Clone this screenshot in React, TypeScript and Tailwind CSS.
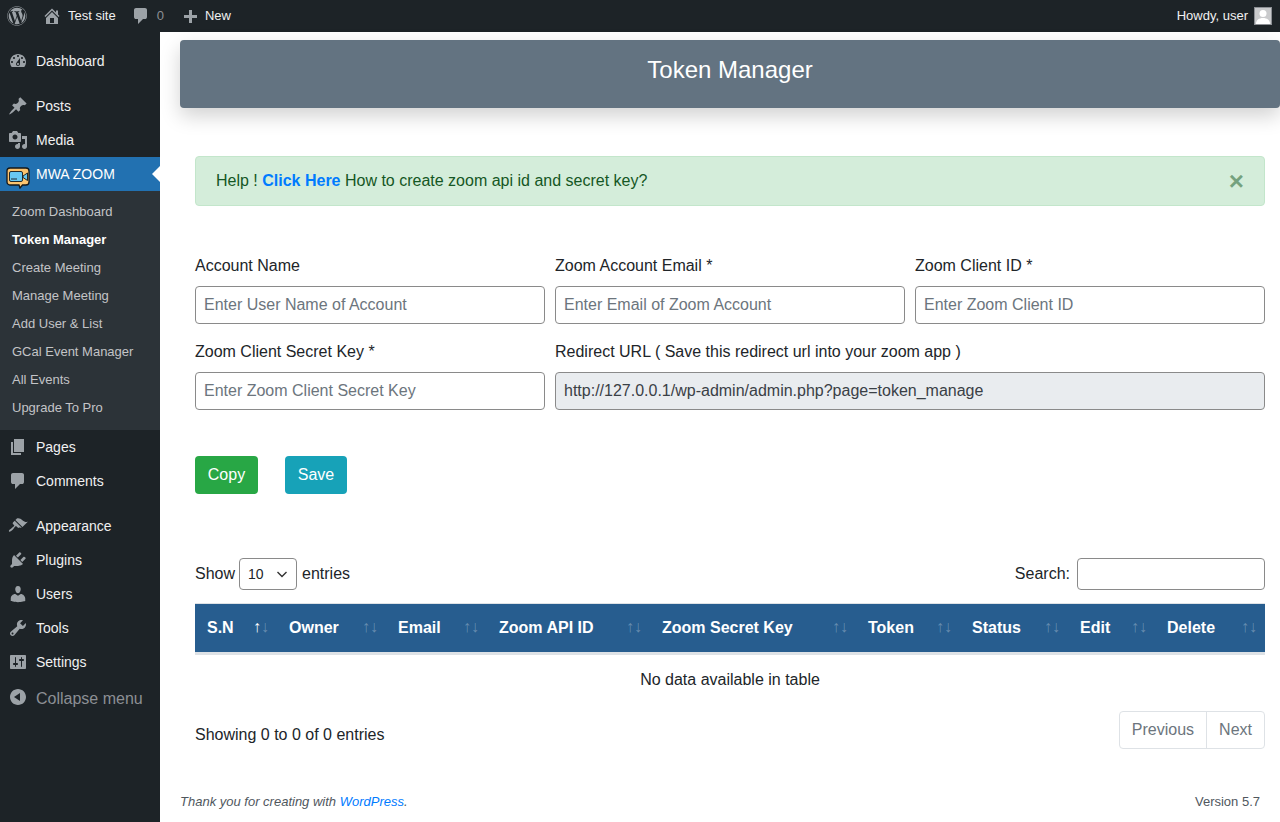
import React from 'react';
import { FaWordpress } from 'react-icons/fa';

const icons = {
  home: 'M16 8.5l1.53 1.53-1.06 1.06L10 4.62l-6.47 6.47-1.06-1.06L10 2.5l4 4v-2h2v4zm-6-2.46l6 5.99V18H4v-5.97zM12 17v-5H8v5h4z',
  comment: 'M5 2h9q.82 0 1.41.59T16 4v7q0 .82-.59 1.41T14 13h-2l-5 5v-5H5q-.82 0-1.41-.59T3 11V4q0-.82.59-1.41T5 2z',
  plus: 'M17 7v3h-5v5H9v-5H4V7h5V2h3v5h5z',
  dashboard: 'M3.76 16h12.48c1.1-1.37 1.76-3.11 1.76-5 0-4.42-3.58-8-8-8s-8 3.58-8 8c0 1.89.66 3.63 1.76 5zM10 4c.55 0 1 .45 1 1s-.45 1-1 1-1-.45-1-1 .45-1 1-1zM6 6c.55 0 1 .45 1 1s-.45 1-1 1-1-.45-1-1 .45-1 1-1zm8 0c.55 0 1 .45 1 1s-.45 1-1 1-1-.45-1-1 .45-1 1-1zm-5.37 5.55L12 7v6c0 1.1-.9 2-2 2s-2-.9-2-2c0-.57.24-1.08.63-1.45zM4 10c.55 0 1 .45 1 1s-.45 1-1 1-1-.45-1-1 .45-1 1-1zm12 0c.55 0 1 .45 1 1s-.45 1-1 1-1-.45-1-1 .45-1 1-1zm-5 3c0-.55-.45-1-1-1s-1 .45-1 1 .45 1 1 1 1-.45 1-1z',
  posts: 'M10.44 3.02l1.82-1.82 6.36 6.35-1.83 1.82c-1.05-.68-2.48-.57-3.41.36l-.75.75c-.92.93-1.04 2.35-.35 3.41l-1.83 1.82-2.41-2.41-2.8 2.79c-.42.42-3.38 2.71-3.8 2.29s1.86-3.39 2.28-3.81l2.79-2.79L4.1 9.36l1.83-1.82c1.05.69 2.48.57 3.4-.36l.75-.75c.93-.92 1.05-2.35.36-3.41z',
  media: 'M13 11V4c0-.55-.45-1-1-1h-1.67L9 1H5L3.67 3H2c-.55 0-1 .45-1 1v7c0 .55.45 1 1 1h10c.55 0 1-.45 1-1zM7 4.5c1.38 0 2.5 1.12 2.5 2.5S8.38 9.5 7 9.5 4.5 8.38 4.5 7 5.62 4.5 7 4.5zM14 6h5v10.5c0 1.38-1.12 2.5-2.5 2.5S14 17.88 14 16.5s1.12-2.5 2.5-2.5c.17 0 .34.02.5.05V9h-3V6zm-4 8.05V13h2v3.5c0 1.38-1.12 2.5-2.5 2.5S7 17.88 7 16.5 8.12 14 9.5 14c.17 0 .34.02.5.05z',
  pages: 'M6 15V2h10v13H6zm-1 1h8v2H3V5h2v11z',
  appearance: 'M14.48 11.06L7.41 3.99l1.5-1.5c.5-.56 2.3-.47 3.51.32 1.21.8 1.43 1.28 2.91 2.1 1.18.64 2.45 1.26 4.45.85zm-.71.71L6.7 4.7 4.93 6.47c-.39.39-.39 1.02 0 1.41l1.06 1.06c.39.39.39 1.03 0 1.42-.6.6-1.43 1.11-2.21 1.69-.35.26-.7.53-1.01.84C1.43 13.23.4 14.85 1.05 15.5c.65.65 2.27-.38 3.62-1.72.31-.31.58-.66.84-1.01.58-.78 1.09-1.61 1.69-2.21.39-.39 1.03-.39 1.42 0l1.06 1.06c.39.39 1.02.39 1.41 0z',
  plugins: 'M13.11 4.36L9.87 7.6 8 5.73l3.24-3.24c.35-.34 1.05-.2 1.56.32.52.51.66 1.21.31 1.55zm-8 1.77l.91-1.12 9.01 9.01-1.19.84c-.71.71-2.63 1.16-3.82 1.16H6.14L4.9 17.26c-.59.59-1.54.59-2.12 0-.59-.58-.59-1.53 0-2.12l1.24-1.24v-3.88c0-1.13.4-3.19 1.09-3.89zm7.26 3.97l3.24-3.24c.34-.35 1.04-.21 1.55.31.52.51.66 1.21.31 1.55l-3.24 3.25z',
  users: 'M10 9.25c-2.27 0-2.73-3.44-2.73-3.44C7 4.02 7.82 2 9.97 2c2.16 0 2.98 2.02 2.71 3.81 0 0-.41 3.44-2.68 3.44zm0 2.57L12.72 10c2.39 0 4.52 2.33 4.52 4.53v2.49s-3.65 1.13-7.24 1.13c-3.65 0-7.24-1.13-7.24-1.13v-2.49c0-2.25 1.94-4.48 4.47-4.48z',
  tools: 'M16.68 9.77c-1.34 1.34-3.3 1.67-4.95.99l-5.41 6.52c-.99.99-2.59.99-3.58 0s-.99-2.59 0-3.57l6.52-5.42c-.68-1.65-.35-3.61.99-4.95 1.28-1.28 3.12-1.62 4.72-1.06l-2.89 2.89 2.82 2.82 2.86-2.87c.53 1.58.18 3.39-1.08 4.65zM3.81 16.21c.4.39 1.04.39 1.43 0 .4-.4.4-1.04 0-1.43-.39-.4-1.03-.4-1.43 0-.39.39-.39 1.03 0 1.43z',
  settings: 'M18 16V4c0-.55-.45-1-1-1H3c-.55 0-1 .45-1 1v12c0 .55.45 1 1 1h14c.55 0 1-.45 1-1zM8 11h1c.55 0 1 .45 1 1s-.45 1-1 1H8v1.5c0 .28-.22.5-.5.5s-.5-.22-.5-.5V13H6c-.55 0-1-.45-1-1s.45-1 1-1h1V5.5c0-.28.22-.5.5-.5s.5.22.5.5V11zm5-2h-1c-.55 0-1-.45-1-1s.45-1 1-1h1V5.5c0-.28.22-.5.5-.5s.5.22.5.5V7h1c.55 0 1 .45 1 1s-.45 1-1 1h-1v5.5c0 .28-.22.5-.5.5s-.5-.22-.5-.5V9z',
  collapse: 'M10 2c4.42 0 8 3.58 8 8s-3.58 8-8 8-8-3.58-8-8 3.58-8 8-8zm2 4l-6 4 6 4V6z',
};

type IconName = keyof typeof icons;

const Dash = ({ name, className }: { name: IconName; className?: string }) => (
  <svg viewBox="0 0 20 20" className={className} fill="currentColor" fillRule="evenodd">
    <path d={icons[name]} />
  </svg>
);

const MenuItem = ({ icon, label }: { icon: IconName; label: string }) => (
  <div className="flex h-[34px] items-center text-[14px] text-[#f0f0f1]">
    <div className="flex w-[36px] shrink-0 justify-center pr-[1px]">
      <Dash name={icon} className="h-5 w-5 text-[#9ca2a7]" />
    </div>
    <span>{label}</span>
  </div>
);

const ZoomLogo = () => (
  <svg viewBox="0 0 24 22" className="h-[22px] w-[24px]">
    <path d="M4 1h16a3 3 0 0 1 3 3v11a3 3 0 0 1-3 3h-3.500l-2.500 3-1-3H4a3 3 0 0 1-3-3V4a3 3 0 0 1 3-3z" fill="#fcc46f" stroke="#14181b" strokeWidth="1.300" />
    <rect x="3.500" y="4.500" width="13" height="10" rx="1.500" fill="#68c8f2" stroke="#14181b" strokeWidth="0.900" />
    <path d="M17 9l4.500-3v7.500L17 10.500z" fill="#68c8f2" stroke="#14181b" strokeWidth="0.900" />
    <path d="M5 12h6" stroke="#14181b" strokeWidth="0.900" />
  </svg>
);

const subItems = ['Zoom Dashboard', 'Token Manager', 'Create Meeting', 'Manage Meeting', 'Add User & List', 'GCal Event Manager', 'All Events', 'Upgrade To Pro'];

const Sidebar = () => (
  <aside className="flex w-[160px] shrink-0 flex-col bg-[#1d2327] pt-[12px]">
    <MenuItem icon="dashboard" label="Dashboard" />
    <div className="h-[11px]" />
    <MenuItem icon="posts" label="Posts" />
    <MenuItem icon="media" label="Media" />
    <div className="relative flex h-[34px] items-center bg-[#2271b1] text-[14px] text-white">
      <div className="flex w-[36px] shrink-0 justify-start pl-[6px] pt-[8px]">
        <ZoomLogo />
      </div>
      <span>MWA ZOOM</span>
      <div className="absolute right-0 top-[9px] h-0 w-0 border-y-[8px] border-r-[8px] border-y-transparent border-r-white" />
    </div>
    <div className="flex flex-col bg-[#2c3338] pb-[8px] pt-[7px]">
      {subItems.map(item => (
        <div key={item} className={`flex h-[28px] items-center pl-[12px] text-[13px] ${item === 'Token Manager' ? 'font-semibold text-white' : 'text-[#c3c4c7]'}`}>
          {item}
        </div>
      ))}
    </div>
    <MenuItem icon="pages" label="Pages" />
    <MenuItem icon="comment" label="Comments" />
    <div className="h-[11px]" />
    <MenuItem icon="appearance" label="Appearance" />
    <MenuItem icon="plugins" label="Plugins" />
    <MenuItem icon="users" label="Users" />
    <MenuItem icon="tools" label="Tools" />
    <MenuItem icon="settings" label="Settings" />
    <div className="flex h-[40px] items-center text-[16px] text-[#8c8f94]">
      <div className="flex w-[36px] shrink-0 justify-center pb-[4px] pr-[1px]">
        <Dash name="collapse" className="h-5 w-5 text-[#9ca2a7]" />
      </div>
      <span>Collapse menu</span>
    </div>
  </aside>
);

const TopBar = () => (
  <header className="flex h-[32px] items-center justify-between bg-[#1d2327] text-[13px] text-[#f0f0f1]">
    <div className="flex items-center">
      <FaWordpress className="ml-[7px] h-[20px] w-[20px] text-[#9ca2a7]" />
      <Dash name="home" className="ml-[15px] h-5 w-5 text-[#9ca2a7]" />
      <span className="ml-[6px]">Test site</span>
      <Dash name="comment" className="ml-[15px] h-5 w-5 text-[#9ca2a7]" />
      <span className="ml-[6px] text-[#8c8f94]">0</span>
      <Dash name="plus" className="ml-[16px] h-5 w-5 translate-y-[2px] text-[#9ca2a7]" />
      <span className="ml-[5px]">New</span>
    </div>
    <div className="flex items-center pr-[8px]">
      <span>Howdy, user</span>
      <div className="ml-[6px] flex h-[18px] w-[18px] items-end justify-center overflow-hidden border border-[#8c8f94] bg-[#c9cacc]">
        <svg viewBox="0 0 16 16" className="h-4 w-4 text-white" fill="currentColor">
          <circle cx="8" cy="5.500" r="3.500" />
          <path d="M1 16c0-4 3-6 7-6s7 2 7 6z" />
        </svg>
      </div>
    </div>
  </header>
);

const Field = ({ label, placeholder, className }: { label: string; placeholder: string; className?: string }) => (
  <div className={`flex flex-col ${className ?? ''}`}>
    <label className="mb-[8px] h-[24px] leading-[24px]">{label}</label>
    <input
      placeholder={placeholder}
      className="h-[38px] w-full rounded-[4px] border border-[#8a8a8a] bg-white px-[8px] text-[16px] text-[#495057] outline-none placeholder:text-[#6c757d]"
    />
  </div>
);

const columns = [
  { name: 'S.N', width: 'w-[82px]', active: true },
  { name: 'Owner', width: 'w-[109px]' },
  { name: 'Email', width: 'w-[101px]' },
  { name: 'Zoom API ID', width: 'w-[163px]' },
  { name: 'Zoom Secret Key', width: 'w-[206px]' },
  { name: 'Token', width: 'w-[104px]' },
  { name: 'Status', width: 'w-[108px]' },
  { name: 'Edit', width: 'w-[87px]' },
  { name: 'Delete', width: 'w-[110px]' },
];

const TokenTable = () => (
  <table className="w-[1070px] table-fixed border-separate border-spacing-0 border-t border-[#dee2e6]">
    <thead>
      <tr className="bg-[#275d8f] text-white">
        {columns.map(col => (
          <th key={col.name} className={`relative h-[48px] pl-[12px] text-left font-bold ${col.width}`}>
            {col.name}
            <span className={`absolute right-[16px] top-[11px] text-[16px] font-normal leading-[24px] ${col.active ? 'text-white' : 'text-white/30'}`}>↑</span>
            <span className="absolute right-[8px] top-[11px] text-[16px] font-normal leading-[24px] text-white/30">↓</span>
          </th>
        ))}
      </tr>
    </thead>
    <tbody>
      <tr>
        <td colSpan={9} className="h-[51px] border-t-[3px] border-[#dee2e6] pt-[2px] text-center">No data available in table</td>
      </tr>
    </tbody>
  </table>
);

export default function App() {
  return (
    <div className="flex h-[822px] flex-col overflow-hidden bg-white font-['Liberation_Sans',Arial,sans-serif] text-[16px] text-[#212529]">
      <TopBar />
      <div className="flex min-h-0 flex-1">
        <Sidebar />
        <main className="flex min-w-0 flex-1 flex-col pl-[20px] pt-[8px]">
          <div className="flex h-[68px] items-center justify-center rounded-[4px] bg-[#637381] pb-[8px] text-[24px] text-white shadow-[0_8px_20px_rgba(0,0,0,0.18)]">
            Token Manager
          </div>

          <div className="mr-[15px] ml-[15px] flex flex-col">
            <div className="mt-[48px] flex h-[50px] items-center justify-between rounded-[4px] border border-[#c3e6cb] bg-[#d4edda] pl-[20px] pr-[20px] text-[#155724]">
              <span>
                Help ! <a href="#" className="font-bold text-[#007bff]">Click Here</a> How to create zoom api id and secret key?
              </span>
              <span className="text-[26px] font-bold leading-none text-[#155724]/50">×</span>
            </div>

            <div className="mt-[48px] grid grid-cols-3 gap-x-[10px] gap-y-[16px]">
              <Field label="Account Name" placeholder="Enter User Name of Account" />
              <Field label="Zoom Account Email *" placeholder="Enter Email of Zoom Account" />
              <Field label="Zoom Client ID *" placeholder="Enter Zoom Client ID" />
              <Field label="Zoom Client Secret Key *" placeholder="Enter Zoom Client Secret Key" />
              <div className="col-span-2 flex flex-col">
                <label className="mb-[8px] h-[24px] leading-[24px]">Redirect URL ( Save this redirect url into your zoom app )</label>
                <input
                  readOnly
                  value="http://127.0.0.1/wp-admin/admin.php?page=token_manage"
                  className="h-[38px] w-full rounded-[4px] border border-[#8a8a8a] bg-[#e9ecef] px-[8px] text-[16px] text-[#3a4046] outline-none"
                />
              </div>
            </div>

            <div className="mt-[46px] flex gap-[27px]">
              <button className="h-[38px] w-[63px] rounded-[4px] bg-[#28a745] text-white">Copy</button>
              <button className="h-[38px] w-[62px] rounded-[4px] bg-[#17a2b8] text-white">Save</button>
            </div>

            <div className="mt-[64px] flex h-[32px] items-center justify-between">
              <div className="flex items-center">
                <span>Show</span>
                <div className="ml-[4px] flex h-[32px] w-[58px] items-center justify-between rounded-[4px] border border-[#8a8a8a] pl-[8px] pr-[8px] text-[14px]">
                  <span className="pt-[1px]">10</span>
                  <svg viewBox="0 0 12 12" className="h-3 w-3" fill="none" stroke="#333" strokeWidth="1.400">
                    <path d="M1.500 4l4.500 4.500L10.500 4" />
                  </svg>
                </div>
                <span className="ml-[5px]">entries</span>
              </div>
              <div className="flex items-center">
                <span>Search:</span>
                <input className="ml-[7px] h-[32px] w-[188px] rounded-[4px] border border-[#8a8a8a] outline-none" />
              </div>
            </div>

            <div className="mt-[13px]">
              <TokenTable />
            </div>

            <div className="mt-[8px] flex items-start justify-between">
              <span className="mt-[12px]">Showing 0 to 0 of 0 entries</span>
              <div className="flex h-[38px] rounded-[4px] border border-[#dee2e6] text-[#6c757d]">
                <span className="flex items-center px-[12px]">Previous</span>
                <span className="flex items-center border-l border-[#dee2e6] px-[12px]">Next</span>
              </div>
            </div>
          </div>

          <div className="mt-[43px] flex justify-between pr-[20px] text-[13px] text-[#50575e]">
            <span className="italic">
              Thank you for creating with <a href="#" className="text-[#007bff]">WordPress</a>.
            </span>
            <span>Version 5.7</span>
          </div>
        </main>
      </div>
    </div>
  );
}
